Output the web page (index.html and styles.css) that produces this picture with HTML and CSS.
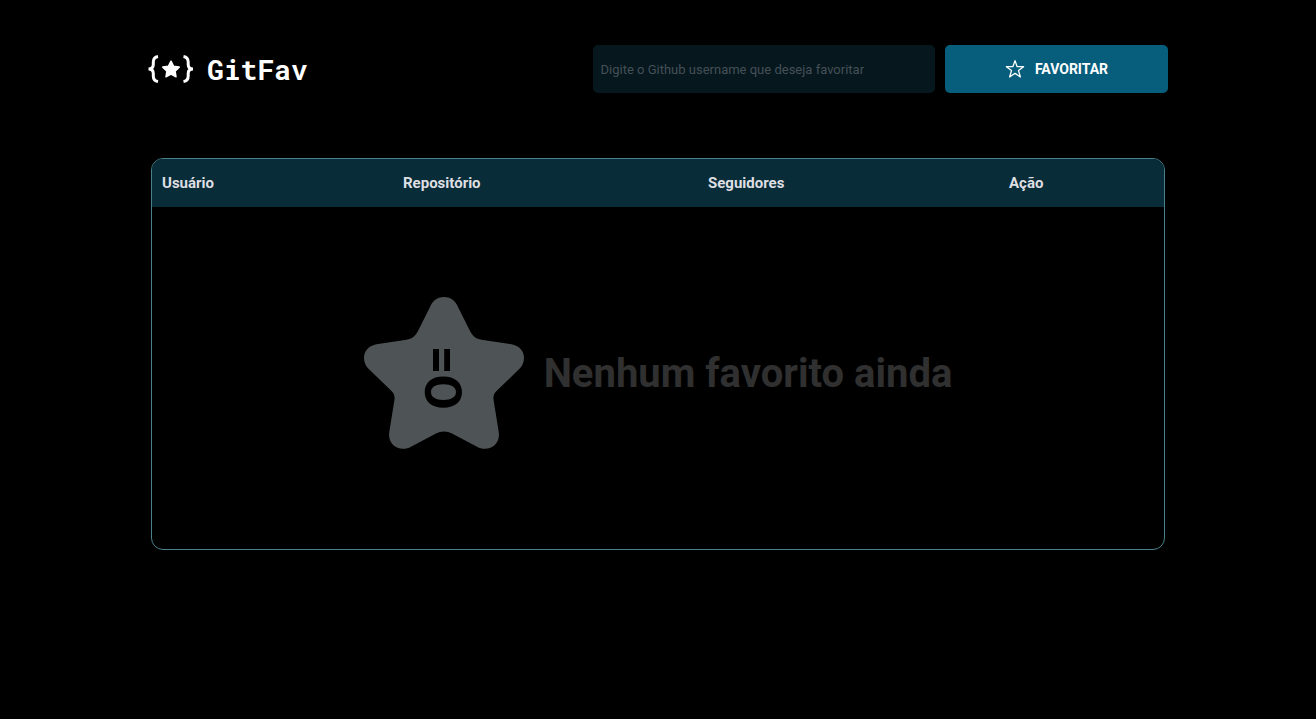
FILE: index.html
```html
<!DOCTYPE html>
<html lang="pt-BR">
<head>
<meta charset="utf-8">
<title>GitFav</title>
<link rel="stylesheet" href="styles.css">
</head>
<body>
<div class="app">
  <header class="header">
    <div class="logo">
      <svg class="logo-mark" viewBox="0 0 46 30" width="46" height="30">
        <path class="brace" d="M10 2.400C6.400 3 5.300 5.300 5.300 8v2.600c0 2.600-1.400 4.400-4.800 4.400 3.400 0 4.800 1.800 4.800 4.400V22c0 2.700 1.100 5 4.700 5.600"/>
        <path class="brace" d="M35.500 2.400C39.100 3 40.200 5.300 40.200 8v2.600c0 2.600 1.400 4.400 4.800 4.400-3.400 0-4.800 1.800-4.800 4.400V22c0 2.700-1.100 5-4.700 5.600"/>
        <path class="mark-star" d="M23 7.200l2.500 5 5.700.9-4.100 4 .9 5.700-5-2.600-5 2.600.9-5.700-4.100-4 5.700-.9z"/>
      </svg>
      <h1 class="logo-name">GitFav</h1>
    </div>
    <form class="search">
      <input class="search-input" type="text" placeholder="Digite o Github username que deseja favoritar">
      <button class="search-button" type="button">
        <svg class="button-star" viewBox="0 0 20 20" width="20" height="20"><path d="M10 1.600l2.150 6.100h6.450l-5.100 3.900 1.900 6.400L10 14.300 4.600 18l1.900-6.400L1.400 7.700h6.450z"/></svg>
        Favoritar
      </button>
    </form>
  </header>
  <main class="table">
    <div class="table-head">
      <span>Usuário</span><span>Repositório</span><span>Seguidores</span><span>Ação</span>
    </div>
    <div class="empty">
      <svg viewBox="0 0 160 152" width="160" height="152">
        <path fill="#4e5455" d="M80 0C86 0 90.500 3 93 8L106 34C108.500 39 112 42 117.500 42.700L147.500 47.300C155 48.500 160 54 160 60.700C160 65 158.500 69 155.500 71.800L133 93.500C130 96.500 129 99 129.500 102.500L134.800 135.500C136 145 129.500 151.800 121 151.800C118 151.800 115.500 151 113 149.700L88 136.500C85.500 135.100 83 134.400 80 134.400C77 134.400 74.500 135.100 72 136.500L47 149.700C44.500 151 42 151.800 39 151.800C30.500 151.800 24 145 25.200 135.500L30.500 102.500C31 99 30 96.500 27 93.500L4.500 71.800C1.500 69 0 65 0 60.700C0 54 5 48.500 12.500 47.300L42.500 42.700C48 42 51.500 39 54 34L67 8C69.500 3 74 0 80 0Z"/>
        <path d="M69 52h6v22h-6zM80.200 52h5.800v22h-5.800z"/>
        <path fill-rule="evenodd" d="M79.300 79.400C91 79.400 98 85.500 98 95S91 110.700 79.300 110.700 60.700 104.500 60.700 95 67.600 79.400 79.300 79.400ZM79.400 87.200C71.500 87.200 67 90 67 95.100S71.500 103 79.400 103 92 100.200 92 95.100 87.300 87.200 79.400 87.200Z"/>
      </svg>
      <p class="empty-text">Nenhum favorito ainda</p>
    </div>
  </main>
</div>
</body>
</html>
```
FILE: styles.css
```css
* {
  box-sizing: border-box;
  margin: 0;
  padding: 0;
}
body {
  background: #000;
  font-family: Roboto, "Liberation Sans", sans-serif;
}
.app {
  width: 1020px;
  margin: 0 auto;
  padding-top: 45px;
}
.header {
  display: flex;
  align-items: center;
  justify-content: space-between;
  height: 48px;
}
.logo {
  display: flex;
  align-items: center;
  gap: 13px;
}
.logo-mark {
  display: block;
  overflow: visible;
}
.brace {
  fill: none;
  stroke: #fff;
  stroke-width: 3;
}
.mark-star {
  fill: #fff;
  stroke: #fff;
  stroke-width: 1.5;
  stroke-linejoin: round;
}
.logo-name {
  padding-top: 1px;
  color: #fff;
  font: 700 28px/47px "Roboto Mono", "DejaVu Sans Mono", monospace;
}
.search {
  display: flex;
  gap: 10px;
}
.search-input {
  width: 342px;
  height: 48px;
  padding: 1px 7.5px 0;
  border: 0;
  border-radius: 5px;
  background: #06181d;
  color: #dedfe3;
  font: 400 13px Roboto, sans-serif;
}
.search-input::placeholder {
  color: #454f58;
}
.search-button {
  display: flex;
  align-items: center;
  justify-content: center;
  gap: 10px;
  width: 223px;
  height: 48px;
  border: 0;
  border-radius: 5px;
  background: #065e7c;
  color: #fff;
  font: 700 14px Roboto, sans-serif;
  text-transform: uppercase;
}
.button-star {
  fill: none;
  stroke: #fff;
  stroke-width: 1.3;
  stroke-linejoin: round;
}
.table {
  width: 1014px;
  height: 392px;
  margin: 65px auto 0;
  border: 1px solid #4b818d;
  border-radius: 12px;
  overflow: hidden;
}
.table-head {
  display: grid;
  grid-template-columns: 241px 305px 301px 1fr;
  height: 48px;
  padding-left: 10px;
  background: #092d38;
  color: #dedfe3;
  font-size: 15px;
  font-weight: 700;
  line-height: 48px;
}
.empty {
  display: flex;
  align-items: center;
  justify-content: center;
  gap: 20px;
  height: 332px;
}
.empty-text {
  color: #303030;
  font-size: 40px;
  font-weight: 700;
  white-space: nowrap;
}
```
